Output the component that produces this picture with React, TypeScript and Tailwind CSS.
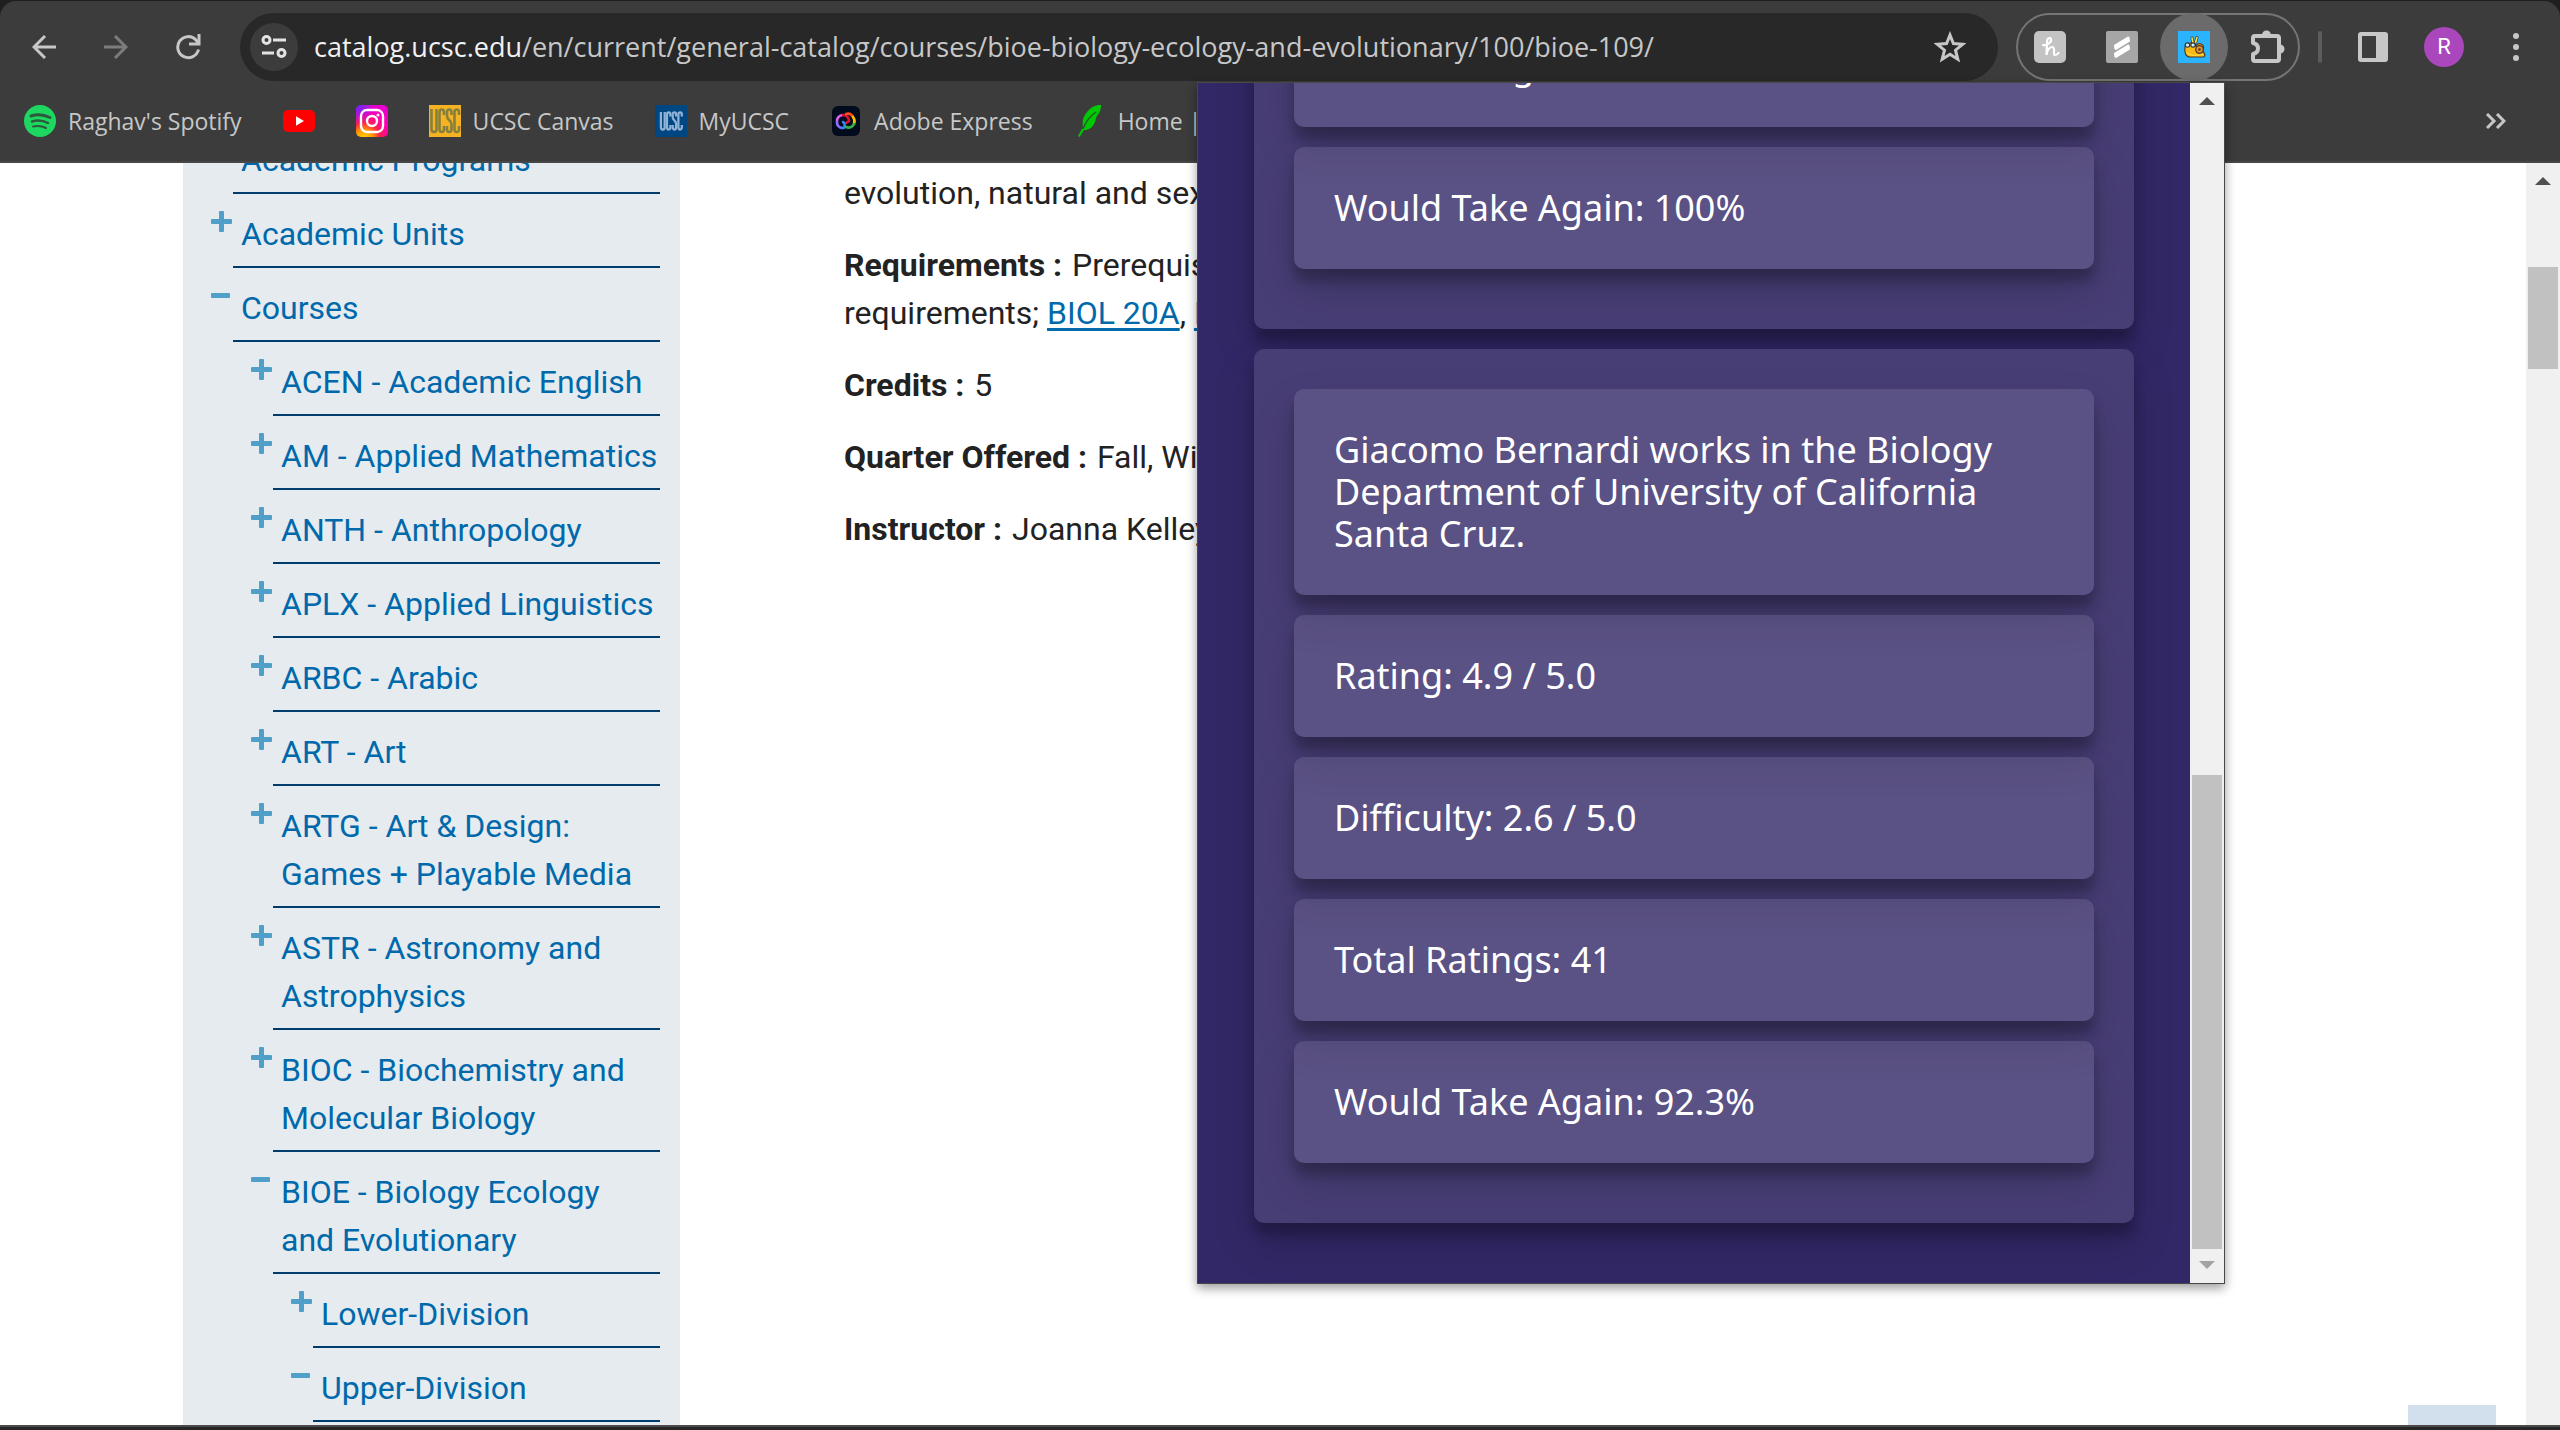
import React from "react";

type NavItem = { label: string; open?: boolean; level: 0 | 1 | 2 };

const navItems: NavItem[] = [
  { label: "Academic Programs", level: 0 },
  { label: "Academic Units", level: 0 },
  { label: "Courses", level: 0, open: true },
  { label: "ACEN - Academic English", level: 1 },
  { label: "AM - Applied Mathematics", level: 1 },
  { label: "ANTH - Anthropology", level: 1 },
  { label: "APLX - Applied Linguistics", level: 1 },
  { label: "ARBC - Arabic", level: 1 },
  { label: "ART - Art", level: 1 },
  { label: "ARTG - Art & Design: Games + Playable Media", level: 1 },
  { label: "ASTR - Astronomy and Astrophysics", level: 1 },
  { label: "BIOC - Biochemistry and Molecular Biology", level: 1 },
  { label: "BIOE - Biology Ecology and Evolutionary", level: 1, open: true },
  { label: "Lower-Division", level: 2 },
  { label: "Upper-Division", level: 2, open: true },
];

const indent = ["", "pl-10", "pl-20"];

function Nav() {
  return (
    <ul className="-mt-[43px]">
      {navItems.map((item) => (
        <li key={item.label} className={indent[item.level]}>
          <div className="flex items-start">
            <button aria-label={item.open ? "Collapse" : "Expand"} className="mt-[17px] w-[22px] shrink-0">
              <svg viewBox="0 0 22 21" className="block h-[21px] w-[22px] fill-[#4f9fc8]">
                {item.open ? (
                  <rect x="0" y="8" width="19" height="5" rx="1" />
                ) : (
                  <path d="M8 1a1 1 0 0 1 1-1h3a1 1 0 0 1 1 1v7h7a1 1 0 0 1 1 1v3a1 1 0 0 1-1 1h-7v7a1 1 0 0 1-1 1h-3a1 1 0 0 1-1-1v-7h-7a1 1 0 0 1-1-1v-3a1 1 0 0 1 1-1h7z" />
                )}
              </svg>
            </button>
            <a
              href="#"
              className="flex-1 border-b-2 border-[#003c6c] pt-4 pb-2 pl-2 text-[32px] leading-[48px] text-[#0069ab]"
            >
              {item.label}
            </a>
          </div>
        </li>
      ))}
    </ul>
  );
}

function Arrow({ down, faded }: { down?: boolean; faded?: boolean }) {
  return (
    <svg viewBox="0 0 16 8" className={faded ? "h-2 w-4 fill-[#a3a3a3]" : "h-2 w-4 fill-[#505050]"}>
      <path d={down ? "M0 0h16L8 8z" : "M0 8h16L8 0z"} />
    </svg>
  );
}

function SpotifyIcon() {
  return (
    <svg viewBox="0 0 32 32" className="size-8">
      <circle cx="16" cy="16" r="16" fill="#1ed760" />
      <g fill="none" stroke="#2c5a3c" strokeLinecap="round">
        <path d="M7 11c6-2 13-1.500 19 1.500" strokeWidth="3" />
        <path d="M8 16.500c5-1.500 11-1 16 1.500" strokeWidth="2.500" />
        <path d="M9 21.500c4.500-1 9-.6 13 1.500" strokeWidth="2" />
      </g>
    </svg>
  );
}

function YoutubeIcon() {
  return (
    <svg viewBox="0 0 32 32" className="size-8">
      <rect y="5" width="32" height="22" rx="5" fill="#f00" />
      <path d="M13 11.300v9.400l8-4.700z" fill="#fff" />
    </svg>
  );
}

function InstagramIcon() {
  return (
    <svg viewBox="0 0 32 32" className="size-8">
      <defs>
        <radialGradient id="ig" cx="0.250" cy="1.050" r="1.100">
          <stop offset="0" stopColor="#ffd600" />
          <stop offset="0.250" stopColor="#ff9a00" />
          <stop offset="0.450" stopColor="#ff1f4b" />
          <stop offset="0.700" stopColor="#ff00b0" />
          <stop offset="1" stopColor="#e800d0" />
        </radialGradient>
        <radialGradient id="ig2" cx="0" cy="0" r="0.600">
          <stop offset="0" stopColor="#5a2cff" />
          <stop offset="1" stopColor="#5a2cff" stopOpacity="0" />
        </radialGradient>
      </defs>
      <rect width="32" height="32" rx="5" fill="url(#ig)" />
      <rect width="32" height="32" rx="5" fill="url(#ig2)" />
      <g fill="none" stroke="#fff" strokeWidth="2.400">
        <rect x="5" y="5" width="22" height="22" rx="6" />
        <circle cx="16" cy="16" r="5" />
      </g>
      <circle cx="22" cy="10" r="1.500" fill="#fff" />
    </svg>
  );
}

function UcscIcon({ bg, fg, inset }: { bg: string; fg: string; inset?: boolean }) {
  return (
    <svg viewBox="0 0 32 32" className="size-8">
      <rect width="32" height="32" fill={bg} />
      <g
        fill="none"
        stroke={fg}
        strokeWidth={inset ? "3" : "2.600"}
        transform={inset ? "translate(4 4) scale(0.760)" : undefined}
      >
        <path d="M2.500 4v20q0 3 2.500 3t2.500-3V4" />
        <path d="M15 10V7q0-2.500-2.200-2.500T10.500 7v17q0 3 2.300 3t2.200-3v-3" />
        <path d="M22.500 10V7q0-2.500-2.200-2.500T18 7v4q0 2 2.200 4t2.300 4v5q0 3-2.300 3T18 24v-3" />
        <path d="M30 10V7q0-2.500-2.200-2.500T25.500 7v17q0 3 2.300 3t2.200-3v-3" />
      </g>
    </svg>
  );
}

function AdobeExpressIcon() {
  return (
    <svg viewBox="0 0 32 32" className="size-8">
      <rect x="2" y="1" width="28" height="30" rx="6" fill="#000b1d" />
      <g fill="none" strokeWidth="2.600" strokeLinecap="round">
        <path d="M7 17a6 6 0 0 1 6-7" stroke="#e060f0" />
        <path d="M13 10a6 6 0 0 1 6 6l-3 2" stroke="#e01030" />
        <path d="M7 17a5.500 5.500 0 0 0 5 6" stroke="#8a6cff" />
        <path d="M12 23c4 0 3-5 1-6" stroke="#2d8cf0" />
        <path d="M16 9a6 6 0 0 1 7 3" stroke="#ff4a1c" />
        <path d="M23 12a7 7 0 0 1 1 7" stroke="#ffc400" />
        <path d="M24 19a6 6 0 0 1-8 3" stroke="#35b34a" />
      </g>
    </svg>
  );
}

function FeatherIcon() {
  return (
    <svg viewBox="0 0 32 32" className="size-8">
      <path d="M27 0c-5-.5-10 2-14 7-4 5-5 9-4 15L4 31l1.500 1L10 25c4 0 8-2 10-6 2-3 1-5 3-8 3-3 4-7 4-11z" fill="#00c805" />
      <path d="M22 7C16 11 12 16 9 24" fill="none" stroke="#25592a" strokeWidth="1.500" />
    </svg>
  );
}

const bookmarks: { label?: string; name: string; icon: React.ReactNode }[] = [
  { label: "Raghav's Spotify", name: "Spotify", icon: <SpotifyIcon /> },
  { name: "YouTube", icon: <YoutubeIcon /> },
  { name: "Instagram", icon: <InstagramIcon /> },
  { label: "UCSC Canvas", name: "Canvas", icon: <UcscIcon bg="#f5b323" fg="#87803c" /> },
  { label: "MyUCSC", name: "MyUCSC", icon: <UcscIcon bg="#004680" fg="#8fb2d6" inset /> },
  { label: "Adobe Express", name: "Adobe", icon: <AdobeExpressIcon /> },
  { label: "Home |", name: "Home", icon: <FeatherIcon /> },
];

function SnailIcon() {
  return (
    <svg viewBox="0 0 32 32" className="size-8">
      <rect width="32" height="32" fill="#2ab4ff" />
      <path
        d="M7 16c0-3 2-4 5-4l5-1 1 5c0-3 3-4 5-3 3 1 3 4 2 7l2 4-1 2H12c-4 0-6-4-5-10z"
        fill="#fbb913"
        stroke="#4a3a28"
        strokeWidth="1.200"
      />
      <path d="M15 12l-1-5M17.500 11.500l1.500-5" fill="none" stroke="#4a3a28" strokeWidth="3" strokeLinecap="round" />
      <path d="M15 12l-1-5M17.500 11.500l1.500-5" fill="none" stroke="#ffe14a" strokeWidth="1.600" strokeLinecap="round" />
      <circle cx="21.500" cy="18.500" r="3.800" fill="#e8932b" stroke="#503828" strokeWidth="1.300" />
      <circle cx="21.500" cy="18.500" r="1.300" fill="#503828" />
      <circle cx="9.500" cy="14" r="2.200" fill="#d8f1ff" stroke="#2b3a4a" strokeWidth="1.200" />
      <circle cx="15" cy="14" r="2.200" fill="#d8f1ff" stroke="#2b3a4a" strokeWidth="1.200" />
      <path d="M9 22c4 3 9 3 16 1" fill="none" stroke="#ffe14a" strokeWidth="1" />
    </svg>
  );
}

function Toolbar() {
  return (
    <div className="flex h-[68px] items-center pr-8 pl-5">
      <button aria-label="Back" className="flex size-12 items-center justify-center">
        <svg viewBox="0 0 24 24" className="size-6 fill-none stroke-[#c7c7c7] stroke-3">
          <path d="M24 12H2M13 1L2 12l11 11" />
        </svg>
      </button>
      <button aria-label="Forward" disabled className="ml-6 flex size-12 items-center justify-center">
        <svg viewBox="0 0 24 24" className="size-6 fill-none stroke-[#7c7c7c] stroke-3">
          <path d="M0 12h22M11 1l11 11-11 11" />
        </svg>
      </button>
      <button aria-label="Reload" className="ml-6 flex size-12 items-center justify-center">
        <svg viewBox="0 0 26 26" className="size-[26px] fill-none stroke-[#c7c7c7] stroke-3">
          <path d="M23.500 15.500A10.500 10.500 0 1 1 21 6l2 3" />
          <path d="M24 0v10H14" />
        </svg>
      </button>
      <div className="ml-7 flex h-full flex-1 items-center rounded-full bg-[#282828] pr-8 pl-[10px]">
        <button aria-label="Site information" className="flex size-12 items-center justify-center rounded-full bg-[#3c3c3c]">
          <svg viewBox="0 0 26 26" className="size-[26px] fill-none stroke-[#e3e3e3] stroke-3">
            <circle cx="5.500" cy="6" r="3.500" />
            <path d="M12 6h13M1 19h12" />
            <circle cx="20.500" cy="19" r="3.500" />
          </svg>
        </button>
        <div className="ml-4 flex-1 text-[27px] leading-9 whitespace-nowrap text-[#c7c7c7]">
          <span className="text-[#f1f1f1]">catalog.ucsc.edu</span>
          /en/current/general-catalog/courses/bioe-biology-ecology-and-evolutionary/100/bioe-109/
        </div>
        <button aria-label="Bookmark this page">
          <svg viewBox="0 0 32 32" className="size-8 fill-none stroke-[#c7c7c7] stroke-3">
            <path d="M16 4l3.400 8.600 9.200.7-7.100 5.900 2.300 9L16 23.200l-7.800 5 2.300-9-7.100-5.900 9.200-.7z" />
          </svg>
        </button>
      </div>
      <div className="ml-[18px] flex h-full items-center rounded-full border-2 border-[#757575]">
        <button aria-label="Honey" className="ml-4">
          <svg viewBox="0 0 32 32" className="block size-8">
            <rect width="32" height="32" rx="5" fill="#c3c3c3" />
            <path
              d="M9 14c4 1 9-3 8-6-1-2-4-1-4 3l-.5 13c.5-5 3-8 5.500-8 4 0 .5 8 3 8 1.500 0 2.500-.5 3.500-2"
              fill="none"
              stroke="#fff"
              strokeWidth="2.200"
              strokeLinecap="round"
            />
          </svg>
        </button>
        <button aria-label="Scribe" className="ml-10">
          <svg viewBox="0 0 32 32" className="block size-8">
            <rect width="32" height="32" rx="2" fill="#a6a6a6" />
            <path d="M8 14L22 5.500q2 0 2 5L10 19q-2 0-2-5zM8 22l14-8.500q2 0 2 5L10 27q-2 0-2-5z" fill="#fff" />
          </svg>
        </button>
        <button aria-label="Slug ratings" className="ml-[22px] flex size-[68px] items-center justify-center rounded-full bg-[#6b6b6b]">
          <SnailIcon />
        </button>
        <button aria-label="Extensions" className="mr-3 ml-[22px]">
          <svg viewBox="0 0 36 36" className="block size-9 fill-none stroke-[#c7c7c7] stroke-[4]">
            <path d="M5 7h22q2 0 2 2v21q0 2-2 2H5q-2 0-2-2v-5q5-1 5-5.500T3 14V9q0-2 2-2z" strokeLinejoin="round" />
            <path d="M12 6a4.500 4.500 0 0 1 9 0zM30 15.500a4.500 4.500 0 0 1 0 9z" className="fill-[#c7c7c7] stroke-none" />
          </svg>
        </button>
      </div>
      <span className="ml-[18px] h-8 w-1 rounded-full bg-[#5c5c5c]" />
      <button aria-label="Side panel" className="ml-9">
        <svg viewBox="0 0 30 30" className="block size-[30px]">
          <rect width="30" height="30" rx="3" fill="#c7c7c7" />
          <rect x="4" y="4" width="14" height="22" fill="#3c3c3c" />
        </svg>
      </button>
      <button
        aria-label="Profile"
        className="ml-9 flex size-10 items-center justify-center rounded-full bg-[#ab47bc] font-[Roboto] text-[22px] leading-none text-white"
      >
        R
      </button>
      <button aria-label="Menu" className="ml-10 w-6">
        <svg viewBox="0 0 24 30" className="block h-[30px] w-6 fill-[#c7c7c7]">
          <circle cx="12" cy="4" r="3" />
          <circle cx="12" cy="15" r="3" />
          <circle cx="12" cy="26" r="3" />
        </svg>
      </button>
    </div>
  );
}

function BookmarksBar() {
  return (
    <nav className="flex h-20 items-center gap-[41px] pr-[54px] pl-6">
      {bookmarks.map((b) => (
        <a
          key={b.name}
          href="#"
          aria-label={b.label ?? b.name}
          className="flex shrink-0 items-center gap-3 text-[23px] leading-8 whitespace-nowrap text-[#c7c7c7]"
        >
          {b.icon}
          {b.label}
        </a>
      ))}
      <button aria-label="More bookmarks" className="ml-auto">
        <svg viewBox="0 0 20 16" className="block h-4 w-5 fill-none stroke-[#c7c7c7] stroke-3">
          <path d="M1 1l7 7-7 7M11 1l7 7-7 7" />
        </svg>
      </button>
    </nav>
  );
}

function ProfessorCard({ facts }: { facts: string[] }) {
  return (
    <ul className="rounded-[10px] bg-[#483e76] p-10 shadow-[0_20px_40px_rgba(0,0,0,0.19),0_12px_12px_rgba(0,0,0,0.23)]">
      {facts.map((fact) => (
        <li
          key={fact}
          className="mb-5 rounded-[10px] bg-white/10 p-10 shadow-[0_20px_40px_rgba(0,0,0,0.19),0_12px_12px_rgba(0,0,0,0.23)]"
        >
          {fact}
        </li>
      ))}
    </ul>
  );
}

function RatingsPopup() {
  return (
    <section
      aria-label="Professor ratings"
      className="absolute top-[82px] right-[335px] flex h-[1202px] w-[1028px] border border-[#474747] shadow-[0_4px_10px_rgba(0,0,0,0.4)]"
    >
      <div className="flex flex-1 flex-col justify-end gap-5 overflow-hidden bg-[#322867] pr-14 pb-[60px] pl-14 font-['Noto_Sans'] text-[36px] leading-[42px] text-white">
        <ProfessorCard facts={["Total Ratings:", "Would Take Again: 100%"]} />
        <ProfessorCard
          facts={[
            "Giacomo Bernardi works in the Biology Department of University of California Santa Cruz.",
            "Rating: 4.9 / 5.0",
            "Difficulty: 2.6 / 5.0",
            "Total Ratings: 41",
            "Would Take Again: 92.3%",
          ]}
        />
      </div>
      <div className="flex w-[34px] flex-col items-center bg-[#f0f0f0] pt-[14px] pb-[14px]">
        <Arrow />
        <div className="mt-auto h-[474px] w-[30px] bg-[#c1c1c1]" />
        <div className="mt-3">
          <Arrow down faded />
        </div>
      </div>
    </section>
  );
}

export default function App() {
  return (
    <div className="relative flex h-screen flex-col overflow-hidden bg-white font-[Roboto] text-[#222]">
      <div className="bg-[#1f1f1f] pt-px">
        <header className="rounded-t-2xl border-b-2 border-[#474747] bg-[#3c3c3c] pt-3 font-['Open_Sans']">
          <Toolbar />
          <BookmarksBar />
        </header>
      </div>
      <main className="flex min-h-0 flex-1 overflow-hidden">
        <aside className="ml-[183px] w-[497px] shrink-0 bg-[#e6ebef] pr-5 pl-7">
          <Nav />
        </aside>
        <article className="ml-[164px] flex-1 space-y-6 pt-[6px] text-[32px] leading-[48px]">
          <p>evolution, natural and sexual</p>
          <p>
            <strong className="mr-0.5">Requirements :</strong> Prerequisite(s):
            <br />
            requirements;{" "}
            <a href="#" className="text-[#0069ab] underline decoration-[3px] underline-offset-4">BIOL 20A</a>,{" "}
            <a href="#" className="text-[#0069ab] underline decoration-[3px] underline-offset-4">BIOE 20B</a>
          </p>
          <p>
            <strong className="mr-0.5">Credits :</strong> 5
          </p>
          <p>
            <strong className="mr-0.5">Quarter Offered :</strong> Fall, Winter
          </p>
          <p>
            <strong className="mr-0.5">Instructor :</strong> Joanna Kelley
          </p>
        </article>
        <div className="mr-[30px] h-5 w-[88px] self-end bg-[#d1e0ec]" />
        <div className="flex w-[34px] flex-col items-center bg-[#f0f0f0] pt-[14px]">
          <Arrow />
          <div className="mt-[82px] h-[102px] w-[30px] bg-[#c1c1c1]" />
        </div>
      </main>
      <div className="h-[5px] shrink-0 border-t-2 border-[#4a4a4a] bg-[#262626]" />
      <RatingsPopup />
    </div>
  );
}
